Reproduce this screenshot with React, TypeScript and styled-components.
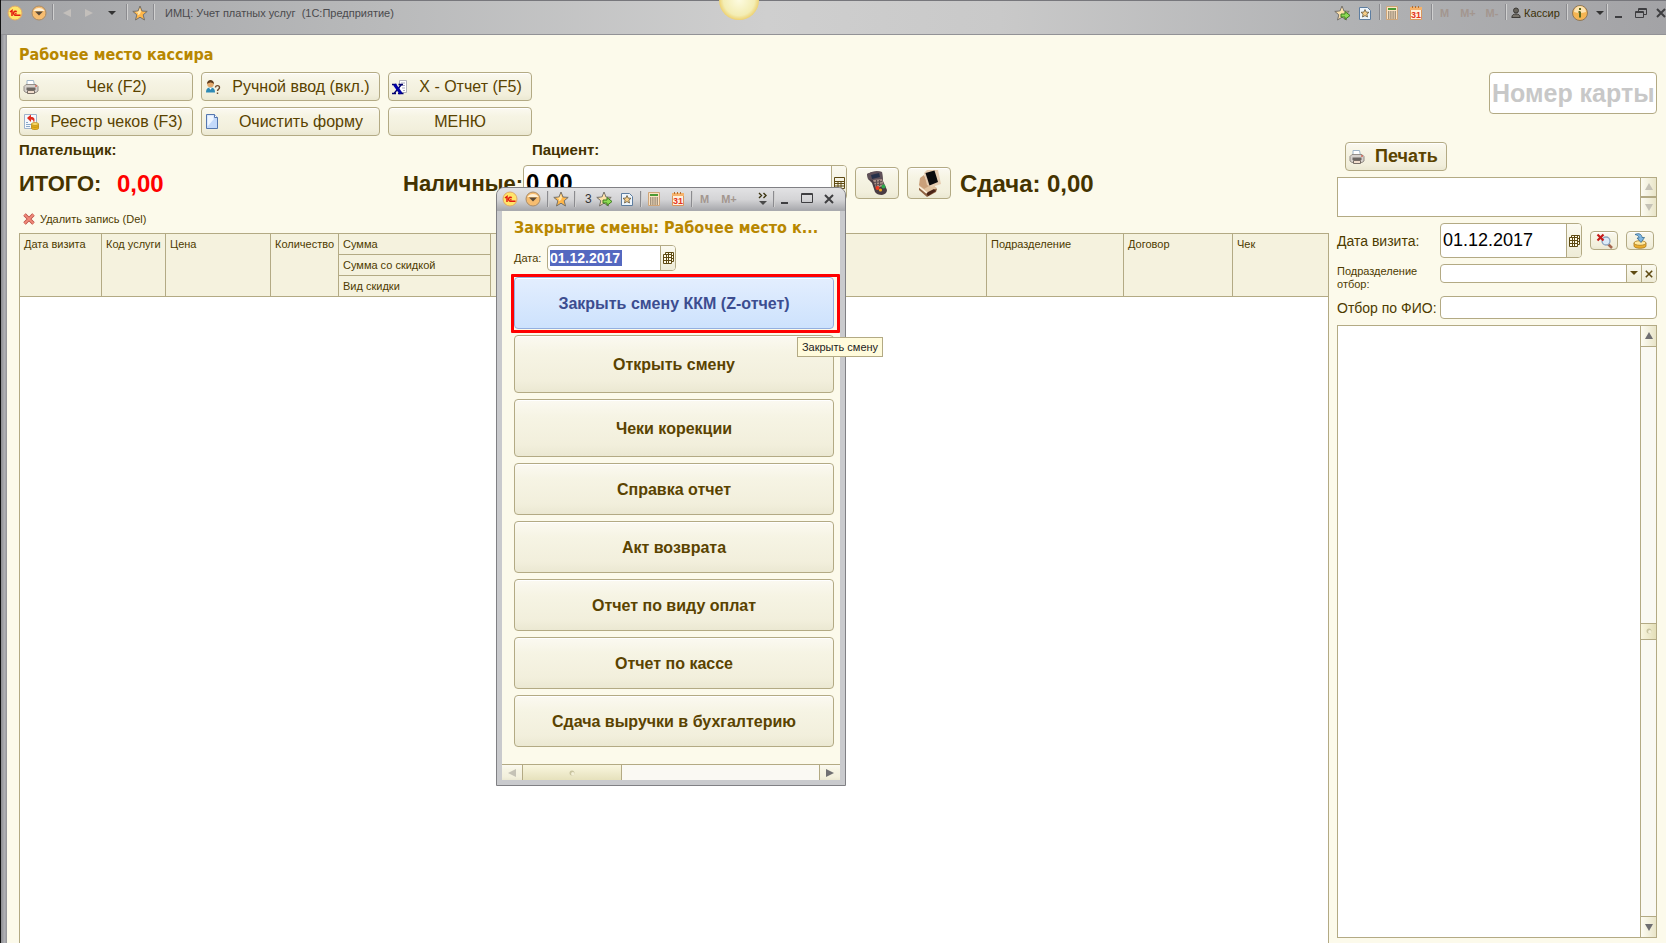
import React from "react";
import styled, { createGlobalStyle, css } from "styled-components";

const sans = `"Liberation Sans", Arial, sans-serif`;
const heading = `"DejaVu Sans Condensed", Tahoma, sans-serif`;
const line = "#b3aa84";
const cream = "#fcfaeb";
const brown = "#4d3b00";
const face = "linear-gradient(#fbf9f1 0%, #f6f4e4 30%, #f2efdc 80%, #ebe8d2 100%)";
const faceSide = "linear-gradient(90deg, #fdfcf3, #e9e5c9)";

const GlobalStyle = createGlobalStyle`
  *, *::before, *::after { box-sizing: border-box; }
  body { margin: 0; font-family: ${sans}; font-size: 11px; color: ${brown}; overflow: hidden; }
  button, input, select, textarea { font: inherit; color: inherit; margin: 0; padding: 0; border: 0; background: none; border-radius: 0; outline: 0; }
  h1, h2 { margin: 0; }
  svg { display: block; flex: none; }
`;

const Frame = styled.div`
  position: relative;
  display: flex;
  flex-direction: column;
  height: 100vh;
  border-left: 1px solid #111;
  background: linear-gradient(90deg, #8d8e92 0, #b4b4b8 4px, #98989c 5px, #98989c 6px, #b0b0b4 100%);
`;

const TitleBar = styled.header`
  display: flex;
  align-items: flex-start;
  flex: none;
  height: 35px;
  padding: 3px 0 0 4px;
  overflow: hidden;
  border-top: 1px solid #77777c;
  border-bottom: 1px solid #929296;
  background: linear-gradient(90deg, #a3a4a7 0%, #b8b9ba 22%, #cfcfcf 46%, #c9c9c9 60%, #b0b1b3 82%, #a3a3a6 100%);
`;

const Orb = styled.div`
  position: absolute;
  top: -20px;
  left: 718px;
  width: 40px;
  height: 40px;
  border-radius: 50%;
  background: radial-gradient(#fdfbe0 0%, #f3edb4 55%, #eed06c 72%);
`;

const Slot = styled.button<{ $w?: number }>`
  display: flex;
  flex: none;
  align-items: center;
  justify-content: center;
  width: ${(p) => p.$w ?? 23}px;
  height: 18px;
`;

const Memory = styled(Slot)`
  color: #a3968f;
  font-weight: bold;
`;

const Divider = styled.span`
  flex: none;
  width: 1px;
  height: 16px;
  background: #8b8b8f;
  box-shadow: 1px 0 0 #d0d0d0;
`;

const AppTitle = styled.span`
  flex: 1;
  padding-left: 11px;
  line-height: 18px;
  color: #4a4a4d;
  white-space: pre;
`;

const UserButton = styled.button`
  display: flex;
  align-items: center;
  gap: 3px;
  width: 60px;
  height: 18px;
  padding-left: 5px;
  color: #3b3108;
`;

const Page = styled.main`
  display: grid;
  flex: 1;
  grid-template-columns: minmax(0, 1fr) 320px;
  column-gap: 8px;
  min-height: 0;
  margin-left: 6px;
  padding: 0 9px 0 12px;
  background: ${cream};
`;

const Workspace = styled.section`
  display: flex;
  flex-direction: column;
  min-height: 0;
`;

const Heading = styled.h1`
  height: 37px;
  padding-top: 10px;
  font: bold 16px/20px ${heading};
  color: #b88700;
`;

const Commands = styled.div`
  display: grid;
  grid-template-columns: 174px 179px 144px;
  gap: 6px 8px;
`;

const raised = css`
  border: 1px solid ${line};
  border-radius: 4px;
  background: ${face};
  box-shadow: inset 0 1px 0 #fff;
`;

const Command = styled.button<{ $bold?: boolean }>`
  ${raised}
  display: flex;
  align-items: center;
  width: 100%;
  height: 29px;
  padding: 0 3px;
  font-size: ${(p) => (p.$bold ? 18 : 16)}px;
  font-weight: ${(p) => (p.$bold ? "bold" : "normal")};
  color: #5a4300;
  white-space: nowrap;
`;

const CommandLabel = styled.span`
  flex: 1;
  text-align: center;
  svg + & { padding-left: 5px; }
`;

const People = styled.div`
  display: grid;
  grid-template-columns: 513px 1fr;
  height: 29px;
  font-size: 15px;
  line-height: 27px;
  font-weight: bold;
  color: #443300;
`;

const Totals = styled.div`
  display: grid;
  grid-template-columns: 98px 286px 120px 324px 113px 87px 1fr;
  align-items: center;
  height: 35px;
  font-size: 22px;
  font-weight: bold;
  color: #443300;
  white-space: nowrap;
`;

const Amount = styled.span<{ $red?: boolean }>`
  padding-top: 2px;
  font-size: 24px;
  line-height: 28px;
  color: ${(p) => (p.$red ? "#f00" : "inherit")};
`;

const TotalLabel = styled.label`
  padding-top: 2px;
`;

const Pay = styled.div`
  display: flex;
  align-items: center;
  gap: 8px;
  padding: 0 9px 0 8px;
`;

const PayButton = styled.button`
  ${raised}
  display: flex;
  align-items: center;
  justify-content: center;
  width: 44px;
  height: 32px;
`;

const Group = styled.div<{ $h: number; $w?: number }>`
  display: flex;
  align-items: stretch;
  width: ${(p) => (p.$w ? `${p.$w}px` : "100%")};
  height: ${(p) => p.$h}px;
  overflow: hidden;
  border: 1px solid ${line};
  border-radius: 4px;
  background: #fff;
  color: #000;
`;

const Field = styled.input<{ $size?: number }>`
  flex: 1;
  min-width: 0;
  padding-left: 2px;
  font-size: ${(p) => p.$size ?? 12}px;
  &::placeholder { color: #c8c8c8; font-weight: bold; opacity: 1; }
`;

const GroupButton = styled.button`
  display: flex;
  flex: none;
  align-items: center;
  justify-content: center;
  width: 15px;
  border-left: 1px solid ${line};
  background: linear-gradient(#fbfaf0, #eeebd6);
`;

const DeleteButton = styled.button`
  display: flex;
  align-items: center;
  align-self: flex-start;
  gap: 5px;
  height: 33px;
  padding: 5px 0 0 4px;
`;

const Grid = styled.div`
  flex: 1;
  min-height: 0;
  border: 1px solid ${line};
  border-bottom: 0;
  background: #fff;
`;

const Table = styled.table`
  width: 100%;
  table-layout: fixed;
  border-spacing: 0;
`;

const Th = styled.th<{ $w?: number }>`
  width: ${(p) => (p.$w ? `${p.$w}px` : "auto")};
  height: 21px;
  padding: 4px 0 0 4px;
  border-right: 1px solid ${line};
  border-bottom: 1px solid ${line};
  background: #f5f2de;
  font-weight: normal;
  line-height: 13px;
  text-align: left;
  vertical-align: top;
  white-space: nowrap;
  &[data-last] { border-right: 0; }
`;

const Side = styled.aside`
  display: flex;
  flex-direction: column;
  min-height: 0;
  padding: 37px 0 5px;
`;

const CardField = styled(Group)`
  align-self: flex-end;
`;

const PrintRow = styled.div`
  width: 102px;
  margin: 28px 0 6px 8px;
`;

const Boxed = styled.div<{ $h?: number }>`
  display: flex;
  ${(p) => (p.$h ? `height: ${p.$h}px; flex: none;` : "flex: 1; min-height: 0;")}
  border: 1px solid ${line};
  background: #fff;
`;

const Note = styled.textarea`
  flex: 1;
  resize: none;
  overflow: hidden;
`;

const Filters = styled.div`
  display: grid;
  grid-template-columns: 103px 1fr;
  grid-template-rows: 35px 38px 23px;
  align-items: start;
  margin: 6px 0;
`;

const FilterLabel = styled.label<{ $small?: boolean }>`
  align-self: ${(p) => (p.$small ? "start" : "center")};
  padding-top: ${(p) => (p.$small ? 7 : 0)}px;
  font-size: ${(p) => (p.$small ? 11 : 14)}px;
  line-height: ${(p) => (p.$small ? 13 : 18)}px;
  color: ${brown};
  white-space: nowrap;
`;

const DateRow = styled.div`
  display: flex;
  align-items: center;
  gap: 8px;
`;

const SelectRow = styled.div`
  padding-top: 6px;
`;

const ToolButton = styled.button`
  ${raised}
  display: flex;
  align-items: center;
  justify-content: center;
  width: 28px;
  height: 19px;
`;

const Select = styled.select`
  flex: 1;
  appearance: none;
  padding-left: 2px;
`;

const Bar = styled.div`
  display: flex;
  flex: none;
  flex-direction: column;
  width: 16px;
  border-left: 1px solid ${line};
  background: #faf9f3;
`;

const BarButton = styled.button<{ $h: number }>`
  display: flex;
  flex: none;
  align-items: center;
  justify-content: center;
  height: ${(p) => p.$h}px;
  background: ${faceSide};
  &:first-child { border-bottom: 1px solid ${line}; }
  &:last-child { border-top: 1px solid ${line}; }
`;

const Track = styled.div`
  display: flex;
  flex: 1;
  flex-direction: column;
`;

const Space = styled.span<{ $grow: number }>`
  flex: ${(p) => p.$grow} 0 0;
`;

const Thumb = styled.span`
  display: flex;
  align-items: center;
  justify-content: center;
  height: 17px;
  border: solid ${line};
  border-width: 1px 0;
  background: linear-gradient(90deg, #f9f6df, #e3deb8);
`;

const Dialog = styled.section`
  position: absolute;
  top: 187px;
  left: 495px;
  display: flex;
  flex-direction: column;
  width: 350px;
  padding: 0 5px 5px;
  border: 1px solid #808084;
  border-radius: 8px 8px 0 0;
  background: #c9cacd;
`;

const DialogBar = styled.header`
  display: flex;
  align-items: center;
  height: 23px;
  margin: 0 -5px;
  padding: 0 0 2px 1px;
  border-radius: 7px 7px 0 0;
  background: linear-gradient(#e2e2e4, #d4d4d6 50%, #a9aaae 95%);
`;

const Count = styled.span`
  width: 18px;
  padding-left: 10px;
  font-size: 12px;
  color: #333;
`;

const DialogBody = styled.div`
  display: flex;
  flex-direction: column;
  padding: 7px 6px 0 12px;
  background: ${cream};
`;

const DialogTitle = styled.h2`
  height: 27px;
  font: bold 16px/20px ${heading};
  color: #b88700;
  white-space: nowrap;
`;

const DateLine = styled.div`
  display: flex;
  align-items: center;
  height: 26px;
  margin-bottom: 6px;
`;

const DateLabel = styled.label`
  width: 33px;
`;

const Selected = styled.input`
  width: 72px;
  height: 16px;
  margin: 4px auto 4px 2px;
  background: #5468c0;
  font-size: 14px;
  font-weight: bold;
  color: #fff;
`;

const Actions = styled.div`
  display: flex;
  flex-direction: column;
  gap: 6px;
  padding-bottom: 17px;
`;

const Action = styled.button<{ $tall?: boolean; $active?: boolean }>`
  ${raised}
  position: relative;
  height: ${(p) => (p.$tall ? 58 : 52)}px;
  padding-top: 2px;
  font-size: 16px;
  font-weight: bold;
  color: #5a4300;
  ${(p) =>
    p.$active &&
    css`
      border-color: #94b0e0;
      background: linear-gradient(#e3eefe, #cde2fd);
      color: #3c4d90;
      &::after {
        content: "";
        position: absolute;
        inset: -4px -7px -5px -4px;
        border: 3px solid #f00;
        border-radius: 1px;
      }
    `}
`;

const HBar = styled.div`
  display: flex;
  height: 16px;
  border-top: 1px solid ${line};
  background: #faf9f3;
`;

const HButton = styled.button`
  display: flex;
  align-items: center;
  justify-content: center;
  width: 21px;
  border: solid ${line};
  border-width: 0 1px 0 0;
  background: ${face};
  &:last-child { border-width: 0 0 0 1px; margin-left: auto; }
`;

const HThumb = styled.span`
  display: flex;
  align-items: center;
  justify-content: center;
  width: 99px;
  border-right: 1px solid ${line};
  background: linear-gradient(#f9f6df, #e6e1bc);
`;

const Tooltip = styled.div`
  position: absolute;
  top: 337px;
  left: 796px;
  width: 86px;
  height: 20px;
  border: 1px solid ${line};
  background: #fffbdc;
  line-height: 18px;
  text-align: center;
  color: #222;
  white-space: nowrap;
`;

const Star = ({ arrow }: { arrow?: boolean }) => (
  <svg width="16" height="16" viewBox="0 0 16 16">
    <path d="M8 1l2 5 5.200.4-4 3.400L12.500 15 8 12.200 3.500 15l1.300-5.200-4-3.400L6 6z" fill={arrow ? "#f8dcaa" : "#ffb648"} stroke="#75716a" strokeWidth="1" />
    <path d="M8 3l1 3.500L8 9 5.500 10.500 6 8 3.500 7l3-.5z" fill="#ffe4a8" />
    {arrow && <path d="M7 9h4V6.500l5 4-5 4V12H7z" fill="#8edb54" stroke="#3d7d20" />}
  </svg>
);

const OneC = () => (
  <svg width="16" height="16" viewBox="0 0 16 16">
    <circle cx="8" cy="8" r="7" fill="#ffe56a" stroke="#e0a868" />
    <path d="M3 7l2-1.500V11M9.800 6.600A2 2 0 1 0 8.500 10.200H13.500M9.500 8.400H8.200" fill="none" stroke="#e21b10" strokeWidth="1.500" />
  </svg>
);

const Drop = () => (
  <svg width="16" height="16" viewBox="0 0 16 16">
    <circle cx="8" cy="8" r="7" fill="#f7bd70" stroke="#a88b68" />
    <path d="M2.500 6a6 5 0 0 1 11 0z" fill="#fff0d5" />
    <path d="M4 6.500h8L8 10.500z" fill="#594a39" />
  </svg>
);

const DocStar = () => (
  <svg width="14" height="16" viewBox="0 0 14 16">
    <path d="M1.500 2.500h8l3 3v9h-11z" fill="#eef5fb" stroke="#5d7da0" />
    <path d="M7 4.500l1.200 2.600 2.800.2-2.100 1.900.6 2.800L7 10.600 4.500 12l.6-2.800L3 7.300l2.800-.2z" fill="#f7ce88" stroke="#62553d" strokeWidth=".8" />
  </svg>
);

const Calc = () => (
  <svg width="14" height="16" viewBox="0 0 14 16">
    <path d="M1.500 1.500h11v13h-11z" fill="#fbe3c4" stroke="#cfa578" />
    <path d="M3 3h8v2H3z" fill="#4c9a35" />
    <path d="M3 7h8M3 9h8M3 11h8M3 13h8" stroke="#4b4337" strokeDasharray="1.400 .8" />
  </svg>
);

const Calendar = () => (
  <svg width="14" height="16" viewBox="0 0 14 16">
    <path d="M1.500 2.500h11v12h-11z" fill="#fff2e0" stroke="#d9975d" />
    <path d="M1 2h12v3H1z" fill="#f6b26b" />
    <path d="M3.500 1v2M6.500 1v2M9.500 1v2" stroke="#b26d30" />
    <text x="7" y="13" textAnchor="middle" fontFamily="Liberation Sans, Arial, sans-serif" fontSize="9" fontWeight="bold" fill="#e53420">31</text>
  </svg>
);

const Tri = ({ dir, color = "#6f6f72" }: { dir: "up" | "down" | "left" | "right"; color?: string }) => {
  const d = { up: "M1 8h8L5 1z", down: "M1 2h8L5 9z", left: "M9 1v8L1 5z", right: "M1 1v8l8-4z" }[dir];
  return (
    <svg width="10" height="10" viewBox="0 0 10 10">
      <path d={d} fill={color} />
    </svg>
  );
};

const Caret = ({ color = "#333" }: { color?: string }) => (
  <svg width="8" height="5" viewBox="0 0 8 5">
    <path d="M0 0h8L4 4z" fill={color} />
  </svg>
);

const Printer = () => (
  <svg width="16" height="16" viewBox="0 0 16 16">
    <path d="M4 1.500h6.500l1 5H4z" fill="#fff" stroke="#9fb4c6" />
    <path d="M1 7.500l2-2h10l2 2v4.500l-2 1.500H3L1 12z" fill="#d6d1cc" stroke="#8b847e" strokeWidth=".9" />
    <path d="M3.500 8.500h9v2.500h-9z" fill="#6d6762" />
    <path d="M4.500 11.500h7v3h-7z" fill="#f1ddcc" stroke="#6b625b" strokeWidth=".9" />
    <path d="M12 7h2" stroke="#d23b22" />
  </svg>
);

const Person = () => (
  <svg width="16" height="16" viewBox="0 0 16 16">
    <path d="M1 13.500c0-4 2-5 4.500-5s4.500 1 4.500 5z" fill="#2e8ab5" />
    <path d="M4 8.800l1.500 2 1.500-2z" fill="#fff" />
    <circle cx="5.500" cy="5" r="3.300" fill="#e3a86b" />
    <path d="M2 5c0-5.500 7-5.500 7 0-2-2-4-2-7 0z" fill="#5c3a1c" />
    <path d="M10.500 8.500c0-2.500 4-2.500 4 0 0 1.800-2 1.600-2 3.500M12.500 13.500v1.500" fill="none" stroke="#6f4a2b" strokeWidth="1.400" />
  </svg>
);

const XDoc = () => (
  <svg width="16" height="16" viewBox="0 0 16 16">
    <path d="M7.500 1.500h7v12h-7z" fill="#fff" stroke="#b3b3ba" />
    <path d="M9 4h4M9 6.500h4M10 9h3M11 11.500h2" stroke="#a9a9bd" />
    <path d="M0 5.500h4.500M6.500 5.500H11M0 14.500h4M6 14.500h5.500M9.500 5.500l-7.500 9" stroke="#00006e" strokeWidth="1.300" />
    <path d="M2.500 5.500l6.500 9" stroke="#0000a6" strokeWidth="3" />
  </svg>
);

const Registry = () => (
  <svg width="16" height="16" viewBox="0 0 16 16">
    <path d="M1.500.5h12v14h-12z" fill="#f5f9fd" stroke="#9fb3ca" />
    <path d="M3 8.500h2M3 10.500h5M3 12.500h4" stroke="#8aa9c9" />
    <path d="M4 4L8 .5V3c4 0 4 2.500 3 6C10.500 6.500 10 5.500 8 5.500V8z" fill="#e12b1c" />
    <path d="M8.500 10v4.500c0 1.400 7 1.400 7 0V10z" fill="#e9b21d" stroke="#b88a14" strokeWidth=".8" />
    <ellipse cx="12" cy="10" rx="3.500" ry="1.400" fill="#ffe272" stroke="#b88a14" strokeWidth=".8" />
    <path d="M8.500 12.200c0 1.400 7 1.400 7 0" fill="none" stroke="#b88a14" strokeWidth=".8" />
  </svg>
);

const Blank = () => (
  <svg width="16" height="16" viewBox="0 0 16 16">
    <path d="M1.500.5h8l3 3v11h-11z" fill="#c4dafa" stroke="#5577ae" />
    <path d="M2.500 1.500h6v4l-6 7z" fill="#eff6ff" />
    <path d="M9.500.5v3h3" fill="#fff" stroke="#5577ae" />
  </svg>
);

const Terminal = () => (
  <svg width="26" height="26" viewBox="0 0 26 26">
    <path d="M3 4q7-4 15-2l1 9 4 9q0 4-5 5-5 0-7-3L8 13 4 9z" fill="#4a3c43" />
    <path d="M3 4q7-4 15-2l1 9-4-1H8L4 9z" fill="#5f5058" />
    <path d="M7 5l8-2 1 4-8 2z" fill="#26314a" />
    <path d="M9 10l9-1 2 7-8 2z" fill="#a98f86" />
    <path d="M10 12.500l8-1M11 15l8-1M12.500 10v7M15.500 10v6" stroke="#5e4d50" />
    <circle cx="13.500" cy="18" r="2" fill="#ee3a20" />
    <circle cx="16.500" cy="20" r="1.600" fill="#f0a820" />
    <circle cx="19.500" cy="16.500" r="2" fill="#2ea84a" />
  </svg>
);

const Register = () => (
  <svg width="26" height="28" viewBox="0 0 26 28">
    <path d="M3 17l9-5 9 8-1 3-9 5-8-7z" fill="#8d6040" />
    <path d="M3 16l7-4 11 7-9 5z" fill="#e1c3a0" />
    <path d="M4 9l4-3 5 11-5 3-5-4z" fill="#caa07a" />
    <path d="M8 4l3-3 11 0 3 14-9 3-5-2z" fill="#e6cdb1" />
    <path d="M9.500 4l9-2.500L22 13l-8.500 3.500z" fill="#0b0b0d" />
    <path d="M10 24l8-4 2 2-8 5z" fill="#4a2417" />
    <path d="M3 17.500l8 6.500" stroke="#fff0da" strokeWidth="1.800" />
  </svg>
);

const SmallCalc = () => (
  <svg width="11" height="12" viewBox="0 0 11 12">
    <path d="M.5.5h10v11H.5zM.5 4.500h10M.5 6.500h10M.5 9h10M4 4v8M7 4v8" fill="none" stroke="#5e4a12" />
  </svg>
);

const SmallCal = () => (
  <svg width="11" height="12" viewBox="0 0 11 12">
    <path d="M2.500.5h8v9h-8z" fill="#fffbe8" stroke="#5e4a12" />
    <path d="M5.500.5v2M8.500.5v9M8 3.500h2.500M8 6.500h2.500" fill="none" stroke="#5e4a12" />
    <path d="M.5 2.500h8v9h-8z" fill="#fffbe8" stroke="#5e4a12" />
    <path d="M.5 5.500h8M.5 8.500h8M3.500 2.500v9M5.500 2.500v9" fill="none" stroke="#5e4a12" />
  </svg>
);

const Cross = ({ size = 10, color = "#5e4a12", w = 2 }: { size?: number; color?: string; w?: number }) => (
  <svg width={size} height={size} viewBox="0 0 10 10">
    <path d="M1 1l8 8M9 1L1 9" stroke={color} strokeWidth={w} />
  </svg>
);

const DeleteIcon = () => (
  <svg width="12" height="12" viewBox="0 0 12 12">
    <path d="M1.500 1.500l9 9M10.500 1.500l-9 9" stroke="#b94840" strokeWidth="3.400" />
    <path d="M1.500 1.500l9 9M10.500 1.500l-9 9" stroke="#f08a7a" strokeWidth="1.800" />
  </svg>
);

const FindOff = () => (
  <svg width="17" height="16" viewBox="0 0 17 16">
    <path d="M12 11l4 4" stroke="#a5674e" strokeWidth="2.500" />
    <circle cx="10" cy="8" r="4" fill="#dcebf8" stroke="#8ba4bf" strokeWidth="1.300" />
    <path d="M1.500 1.500l6 6M7.500 1.500l-6 6" stroke="#c51b1b" strokeWidth="2.200" />
  </svg>
);

const LoadIn = () => (
  <svg width="16" height="16" viewBox="0 0 16 16">
    <path d="M2 10v3c0 3 12 3 12 0v-3z" fill="#ecae2e" stroke="#a9781a" strokeWidth=".8" />
    <ellipse cx="8" cy="10" rx="6" ry="2.300" fill="#ffe9a0" stroke="#a9781a" strokeWidth=".8" />
    <path d="M3 1.500c4-2 7 0 7 3h2.500L9 9.500 5 5h2C7 3 5 2 3 1.500z" fill="#7fb6e2" stroke="#35698f" strokeWidth=".8" />
  </svg>
);

const UserIcon = () => (
  <svg width="10" height="12" viewBox="0 0 10 12">
    <circle cx="5" cy="3.500" r="2.500" fill="#66625a" stroke="#3c3a36" />
    <path d="M.8 10.500C1 7.500 3 7 5 7s4 .5 4.200 3.500z" fill="#77736b" stroke="#3c3a36" />
  </svg>
);

const Info = () => (
  <svg width="18" height="18" viewBox="0 0 18 18">
    <circle cx="9" cy="9" r="7.500" fill="#f5b553" stroke="#8d7759" />
    <path d="M3 8a6 6 0 0 1 12 0q-6 2-12 0z" fill="#fde3b0" />
    <path d="M9 4v2M9 7.500V13.500M7.500 8H9" stroke="#5e6a1e" strokeWidth="2" />
  </svg>
);

const Minimize = () => (
  <svg width="10" height="12" viewBox="0 0 10 12">
    <path d="M1 9h7v2H1z" fill="#3e3e41" />
  </svg>
);

const Restore = () => (
  <svg width="12" height="12" viewBox="0 0 12 12">
    <path d="M3.500 4V1.500h8v6H9M.5 4.500h8v6h-8zM.5 5.500h8M3.500 2.500h8" fill="none" stroke="#3e3e41" />
  </svg>
);

const Maximize = () => (
  <svg width="12" height="11" viewBox="0 0 12 11">
    <path d="M.5.5h11v9H.5zM.5 1.500h11" fill="none" stroke="#3e3e41" />
  </svg>
);

const Grip = () => (
  <svg width="6" height="6" viewBox="0 0 6 6">
    <circle cx="3" cy="3" r="2.500" fill="#c9c4a0" />
    <circle cx="3.800" cy="3.800" r="1.700" fill="#f3efd6" />
  </svg>
);

const More = () => (
  <svg width="12" height="14" viewBox="0 0 12 14">
    <path d="M2 1l2.500 2.500L2 6M6.500 1L9 3.500 6.500 6" fill="none" stroke="#3b3410" strokeWidth="1.400" />
    <path d="M2 9h8l-4 4z" fill="#4a4a4a" />
  </svg>
);

const actions = [
  { label: "Закрыть смену ККМ (Z-отчет)", active: true },
  { label: "Открыть смену", tall: true },
  { label: "Чеки корекции", tall: true },
  { label: "Справка отчет" },
  { label: "Акт возврата" },
  { label: "Отчет по виду оплат" },
  { label: "Отчет по кассе" },
  { label: "Сдача выручки в бухгалтерию" },
];

const commands = [
  { label: "Чек (F2)", icon: <Printer /> },
  { label: "Ручной ввод (вкл.)", icon: <Person /> },
  { label: "X - Отчет (F5)", icon: <XDoc /> },
  { label: "Реестр чеков (F3)", icon: <Registry /> },
  { label: "Очистить форму", icon: <Blank /> },
  { label: "МЕНЮ", icon: null },
];

export default function App() {
  return (
    <Frame>
      <GlobalStyle />
      <TitleBar>
        <Slot $w={20} aria-label="1С"><OneC /></Slot>
        <Slot $w={27} aria-label="Главное меню"><Drop /></Slot>
        <Divider />
        <Slot $w={27} aria-label="Назад"><Tri dir="left" color="#c3bfbb" /></Slot>
        <Slot $w={17} aria-label="Вперед"><Tri dir="right" color="#c3bfbb" /></Slot>
        <Slot $w={29} aria-label="История"><Caret /></Slot>
        <Divider />
        <Slot $w={26} aria-label="Избранное"><Star /></Slot>
        <Divider />
        <AppTitle>{"ИМЦ: Учет платных услуг  (1С:Предприятие)"}</AppTitle>
        <Slot aria-label="Добавить в избранное"><Star arrow /></Slot>
        <Slot aria-label="Перейти по ссылке"><DocStar /></Slot>
        <Slot $w={3} as="span" />
        <Divider />
        <Slot $w={24} aria-label="Калькулятор"><Calc /></Slot>
        <Slot aria-label="Календарь"><Calendar /></Slot>
        <Slot $w={4} as="span" />
        <Divider />
        <Memory $w={25}>M</Memory>
        <Memory $w={22}>M+</Memory>
        <Memory $w={26}>M-</Memory>
        <Divider />
        <UserButton><UserIcon />Кассир</UserButton>
        <Divider />
        <Slot $w={26} aria-label="Справка"><Info /></Slot>
        <Slot $w={13} aria-label="Параметры"><Caret /></Slot>
        <Divider />
        <Slot aria-label="Свернуть"><Minimize /></Slot>
        <Slot $w={22} aria-label="Восстановить"><Restore /></Slot>
        <Slot $w={4} as="span" />
        <Slot $w={10} aria-label="Закрыть"><Cross color="#3e3e41" /></Slot>
      </TitleBar>
      <Orb />

      <Page>
        <Workspace>
          <Heading>Рабочее место кассира</Heading>
          <Commands>
            {commands.map((c) => (
              <Command key={c.label}>
                {c.icon}
                <CommandLabel>{c.label}</CommandLabel>
              </Command>
            ))}
          </Commands>
          <People>
            <span>Плательщик:</span>
            <span>Пациент:</span>
          </People>
          <Totals>
            <TotalLabel as="span">ИТОГО:</TotalLabel>
            <Amount as="output" $red>0,00</Amount>
            <TotalLabel htmlFor="cash">Наличные:</TotalLabel>
            <Group $h={35}>
              <Field id="cash" $size={24} defaultValue="0,00" />
              <GroupButton aria-label="Калькулятор"><SmallCalc /></GroupButton>
            </Group>
            <Pay>
              <PayButton aria-label="Терминал"><Terminal /></PayButton>
              <PayButton aria-label="Касса"><Register /></PayButton>
            </Pay>
            <Amount>Сдача:</Amount>
            <Amount as="output">0,00</Amount>
          </Totals>
          <DeleteButton><DeleteIcon />Удалить запись (Del)</DeleteButton>
          <Grid>
            <Table>
              <thead>
                <tr>
                  <Th $w={82} rowSpan={3}>Дата визита</Th>
                  <Th $w={64} rowSpan={3}>Код услуги</Th>
                  <Th $w={105} rowSpan={3}>Цена</Th>
                  <Th $w={68} rowSpan={3}>Количество</Th>
                  <Th $w={152}>Сумма</Th>
                  <Th rowSpan={3} />
                  <Th $w={137} rowSpan={3}>Подразделение</Th>
                  <Th $w={109} rowSpan={3}>Договор</Th>
                  <Th $w={95} rowSpan={3} data-last>Чек</Th>
                </tr>
                <tr><Th>Сумма со скидкой</Th></tr>
                <tr><Th>Вид скидки</Th></tr>
              </thead>
            </Table>
          </Grid>
        </Workspace>

        <Side>
          <CardField $h={42} $w={168}>
            <Field $size={25} placeholder="Номер карты" aria-label="Номер карты" />
          </CardField>
          <PrintRow>
            <Command $bold><Printer /><CommandLabel>Печать</CommandLabel></Command>
          </PrintRow>
          <Boxed $h={40}>
            <Note aria-label="Комментарий" />
            <Bar>
              <BarButton $h={19} aria-label="Вверх"><Tri dir="up" color="#c5c2b6" /></BarButton>
              <BarButton $h={19} aria-label="Вниз"><Tri dir="down" color="#c5c2b6" /></BarButton>
            </Bar>
          </Boxed>
          <Filters>
            <FilterLabel htmlFor="visit">Дата визита:</FilterLabel>
            <DateRow>
              <Group $h={35} $w={142}>
                <Field id="visit" $size={18} defaultValue="01.12.2017" />
                <GroupButton aria-label="Выбрать дату"><SmallCal /></GroupButton>
              </Group>
              <ToolButton aria-label="Отменить поиск"><FindOff /></ToolButton>
              <ToolButton aria-label="Загрузить"><LoadIn /></ToolButton>
            </DateRow>
            <FilterLabel $small htmlFor="dept">Подразделение<br />отбор:</FilterLabel>
            <SelectRow>
              <Group $h={19}>
                <Select id="dept"><option value="" /></Select>
                <GroupButton aria-label="Открыть список"><Caret color="#5e4a12" /></GroupButton>
                <GroupButton aria-label="Очистить"><Cross size={8} /></GroupButton>
              </Group>
            </SelectRow>
            <FilterLabel htmlFor="fio">Отбор по ФИО:</FilterLabel>
            <Group $h={23}><Field id="fio" /></Group>
          </Filters>
          <Boxed>
            <Space $grow={1} />
            <Bar>
              <BarButton $h={21} aria-label="Вверх"><Tri dir="up" /></BarButton>
              <Track>
                <Space $grow={275} />
                <Thumb><Grip /></Thumb>
                <Space $grow={276} />
              </Track>
              <BarButton $h={21} aria-label="Вниз"><Tri dir="down" /></BarButton>
            </Bar>
          </Boxed>
        </Side>
      </Page>

      <Dialog role="dialog" aria-labelledby="shift-title">
        <DialogBar>
          <Slot aria-label="1С"><OneC /></Slot>
          <Slot aria-label="Главное меню"><Drop /></Slot>
          <Slot $w={3} as="span" />
          <Divider />
          <Slot $w={26} aria-label="Избранное"><Star /></Slot>
          <Divider />
          <Count>3</Count>
          <Slot $w={22} aria-label="Добавить в избранное"><Star arrow /></Slot>
          <Slot aria-label="Перейти по ссылке"><DocStar /></Slot>
          <Slot $w={2} as="span" />
          <Divider />
          <Slot $w={26} aria-label="Калькулятор"><Calc /></Slot>
          <Slot $w={21} aria-label="Календарь"><Calendar /></Slot>
          <Slot $w={3} as="span" />
          <Divider />
          <Memory $w={25}>M</Memory>
          <Memory $w={24}>M+</Memory>
          <Slot $w={12} as="span" />
          <Slot $w={20} aria-label="Еще"><More /></Slot>
          <Divider />
          <Slot $w={22} aria-label="Свернуть"><Minimize /></Slot>
          <Slot $w={22} aria-label="Развернуть"><Maximize /></Slot>
          <Slot $w={22} aria-label="Закрыть"><Cross color="#3e3e41" /></Slot>
        </DialogBar>
        <DialogBody>
          <DialogTitle id="shift-title">Закрытие смены: Рабочее место к...</DialogTitle>
          <DateLine>
            <DateLabel htmlFor="shift">Дата:</DateLabel>
            <Group $h={26} $w={129}>
              <Selected id="shift" defaultValue="01.12.2017" />
              <GroupButton aria-label="Выбрать дату"><SmallCal /></GroupButton>
            </Group>
          </DateLine>
          <Actions>
            {actions.map((a) => (
              <Action key={a.label} $tall={a.tall} $active={a.active}>{a.label}</Action>
            ))}
          </Actions>
        </DialogBody>
        <HBar>
          <HButton aria-label="Влево"><Tri dir="left" color="#c5c2b6" /></HButton>
          <HThumb><Grip /></HThumb>
          <HButton aria-label="Вправо"><Tri dir="right" /></HButton>
        </HBar>
      </Dialog>
      <Tooltip role="tooltip">Закрыть смену</Tooltip>
    </Frame>
  );
}
